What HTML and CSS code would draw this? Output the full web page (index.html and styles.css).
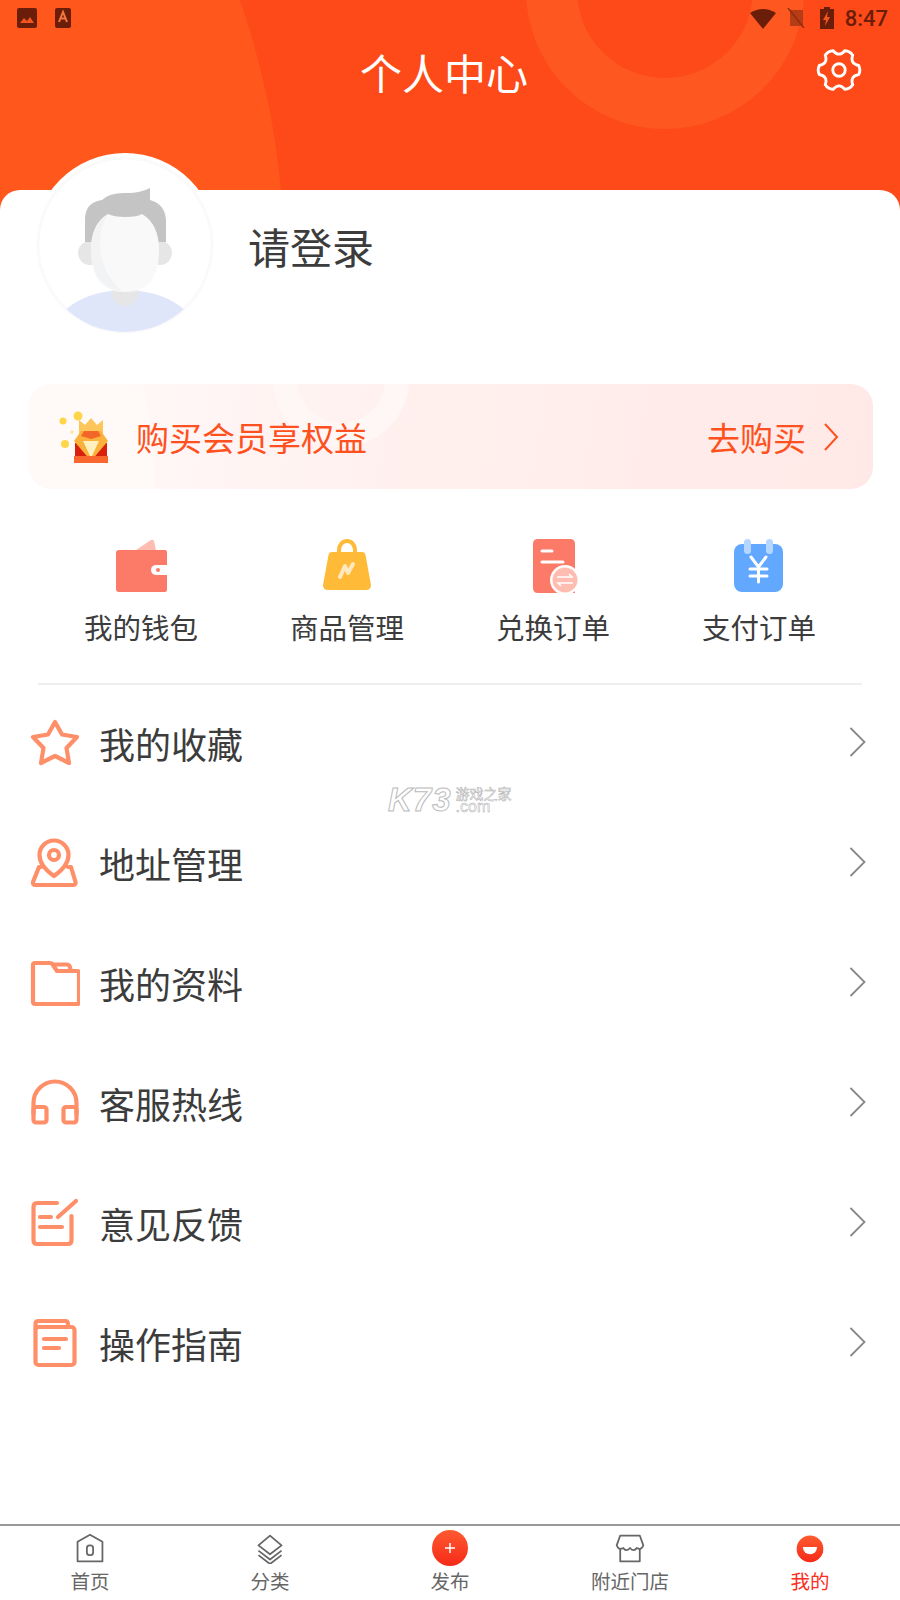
FILE: index.html
```html
<!DOCTYPE html>
<html lang="zh-CN">

<head>
    <meta charset="UTF-8">
    <meta name="viewport" content="width=device-width, initial-scale=1.0">
    <title>个人中心</title>
    <link rel="stylesheet" href="styles.css">
</head>

<body>
    <div class="page">
        <header class="header">
            <div class="blob-left"></div>
            <div class="blob-ring"></div>
            <div class="status-bar">
                <svg class="status-pic" viewBox="0 0 20 20"><rect width="20" height="20" rx="2" fill="#6a1d08"/><path d="M3 15l4-5 3 3 3-4 4 6z" fill="#f4541f"/></svg>
                <svg class="status-a" viewBox="0 0 16 20"><rect width="16" height="20" rx="2" fill="#6a1d08"/><path d="M4 14L8 4l4 10M5.500 10.500h5" fill="none" stroke="#f4763f" stroke-width="2"/></svg>
                <span class="status-gap"></span>
                <svg class="status-wifi" viewBox="0 0 26 21"><path d="M0 5Q13 -3 26 5L13 21z" fill="#6a1d08"/></svg>
                <svg class="status-sim" viewBox="0 0 18 20"><path d="M3 2h8l5 0v16H3z" fill="#b53c14"/><path d="M1 0l16 20" stroke="#8f2e10" stroke-width="1.500"/></svg>
                <svg class="status-bat" viewBox="0 0 14 22"><path d="M4 0h6v2h4v20H0V2h4z" fill="#6a1d08"/><path d="M8 4L3 13h3l-1 6 5-9H7z" fill="#f4541f"/></svg>
                <span class="status-time">8:47</span>
            </div>
            <div class="title-row">
                <h1 class="title">个人中心</h1>
                <svg class="gear" viewBox="0 0 48 48" fill="none" stroke="#fff" stroke-width="3">
                    <path d="M44.500 19.300Q47 24 44.500 28.700Q35.300 30.500 38.300 39.400Q35.500 43.900 30.100 44.100Q24 37 17.900 44.100Q12.500 43.900 9.700 39.400Q12.700 30.500 3.500 28.700Q1 24 3.500 19.300Q12.700 17.500 9.700 8.600Q12.500 4.100 17.900 3.900Q24 11 30.100 3.900Q35.500 4.100 38.300 8.600Q35.300 17.500 44.500 19.300Z"/>
                    <circle cx="24" cy="24" r="6.500"/>
                </svg>
            </div>
        </header>

        <main class="card">
            <section class="profile">
                <svg class="avatar" viewBox="0 0 190 190">
                    <defs>
                        <clipPath id="avatarClip"><circle cx="95" cy="95" r="87"/></clipPath>
                    </defs>
                    <circle cx="95" cy="95" r="92" fill="#fff"/>
                    <circle cx="95" cy="95" r="87" fill="none" stroke="#fafafa" stroke-width="3"/>
                    <ellipse cx="95" cy="190" rx="75" ry="50" fill="#e0e6fa" clip-path="url(#avatarClip)"/>
                    <rect x="82" y="130" width="26" height="26" rx="13" fill="#e6e6e6"/>
                    <circle cx="60" cy="103" r="12" fill="#e6e6e6"/>
                    <circle cx="130" cy="103" r="12" fill="#e6e6e6"/>
                    <path d="M55 92V68Q56 52 72 50Q80 42 98 43Q110 43 120 38V50Q135 54 136 70V92z" fill="#c4c4c4"/>
                    <path d="M95 67Q108 67 112 64Q129 74 129 100Q129 142 95 142Q61 142 61 100Q61 74 78 64Q84 67 95 67z" fill="#f9f9f9"/>
                    <path d="M78 64Q61 74 61 100Q61 136 92 142Q70 120 70 95Q70 75 78 64z" fill="#f2f3f5"/>
                </svg>
                <div class="login-name">请登录</div>
            </section>

            <section class="vip">
                <div class="vip-shape"></div>
                <div class="vip-ring"></div>
                <svg class="vip-icon" viewBox="0 0 60 60">
                    <circle cx="7" cy="14" r="3.500" fill="#ffd64a"/>
                    <circle cx="22" cy="9" r="4.500" fill="#ffd64a"/>
                    <circle cx="9" cy="37" r="4" fill="#ffd64a"/>
                    <circle cx="16" cy="25" r="1.500" fill="#ffe27a"/>
                    <path d="M23 30V13l6 5 6-7 6 7 6-5v17z" fill="#fdc55a"/>
                    <path d="M19 36h32v15H19z" fill="#d9200c"/>
                    <path d="M18 34l7-10h20l7 10-17 20z" fill="#fbb23c"/>
                    <path d="M27 34h16l-8 17z" fill="#fff0c0"/>
                    <path d="M28 24h14l3 5-10 3-10-3z" fill="#f4652a"/>
                    <path d="M18 49h34v7H18z" fill="#f9662e"/>
                </svg>
                <span class="vip-text">购买会员享权益</span>
                <span class="vip-buy">去购买</span>
                <svg class="vip-arrow" viewBox="0 0 16 28" fill="none" stroke="#ff5020" stroke-width="2"><path d="M2 1l12 13L2 27"/></svg>
            </section>

            <section class="quick">
                <div class="quick-item">
                    <svg class="quick-icon" viewBox="0 0 54 54">
                        <path d="M22 11L37 1q2 -1 3 1l2 9z" fill="#ffbdb2"/>
                        <path d="M2 14q0-3 3-3h46q2 0 2 2v13H43q-6 0-6 5t6 5h10v15q0 2-2 2H5q-3 0-3-3z" fill="#fb7a68"/>
                        <circle cx="44" cy="31" r="2" fill="#fb7a68"/>
                    </svg>
                    <span class="quick-label">我的钱包</span>
                </div>
                <div class="quick-item">
                    <svg class="quick-icon" viewBox="0 0 54 54">
                        <path d="M19 14V11a8 9 0 0 1 16 0v3" fill="none" stroke="#ffbb38" stroke-width="4"/>
                        <path d="M12 13h30q3 0 3.500 3L51 46q0 5-5 5H8q-5 0-5-5l5.500-30Q9 13 12 13z" fill="#ffbb38"/>
                        <path d="M20 38l5-11 3 7 5-9" fill="none" stroke="#ffe8c0" stroke-width="4" stroke-linejoin="round" stroke-linecap="round"/>
                    </svg>
                    <span class="quick-label">商品管理</span>
                </div>
                <div class="quick-item">
                    <svg class="quick-icon" viewBox="0 0 54 54">
                        <path d="M12 0h32q5 0 5 5v49H12q-5 0-5-5V5q0-5 5-5z" fill="#fb7a68"/>
                        <path d="M16 12h10M16 23h21" stroke="#fff" stroke-width="3" stroke-linecap="round"/>
                        <circle cx="39" cy="41" r="15" fill="#fff"/>
                        <circle cx="39" cy="41" r="12.500" fill="#ffbdb2"/>
                        <path d="M31 38h15l-3-3M47 44H32l3 3" fill="none" stroke="#fff" stroke-width="1.500"/>
                    </svg>
                    <span class="quick-label">兑换订单</span>
                </div>
                <div class="quick-item">
                    <svg class="quick-icon" viewBox="0 0 54 54">
                        <rect x="2" y="5" width="49" height="48" rx="8" fill="#62a8ff"/>
                        <rect x="12" y="0" width="7" height="15" rx="3.500" fill="#b4d6ff"/>
                        <rect x="34" y="0" width="7" height="15" rx="3.500" fill="#b4d6ff"/>
                        <path d="M19 18l7.500 10L34 18M18 30h17M18 37h17M26.500 28v15" fill="none" stroke="#fff" stroke-width="3" stroke-linecap="round"/>
                    </svg>
                    <span class="quick-label">支付订单</span>
                </div>
            </section>

            <section class="menu">
                <div class="menu-row">
                    <svg class="menu-icon" viewBox="0 0 50 50"><path d="M25 4l7 12.500 15 2.500-10.500 11L39 45l-14-7-14 7 2.500-15L3 19l15-2.500z"/></svg>
                    <span class="menu-text">我的收藏</span>
                    <svg class="menu-arrow" viewBox="0 0 17 30"><path d="M1.500 1l14 14-14 14"/></svg>
                </div>
                <div class="menu-row">
                    <svg class="menu-icon" viewBox="0 0 50 50"><path d="M24 38C14 31 9.500 25 9.500 17a14.500 14.500 0 0 1 29 0C38.500 25 34 31 24 38z"/><circle cx="24" cy="17" r="5"/><path d="M11 29H9L3 44q-.5 3 2.500 3H43q3 0 2.500-3L41 29h-3"/></svg>
                    <span class="menu-text">地址管理</span>
                    <svg class="menu-arrow" viewBox="0 0 17 30"><path d="M1.500 1l14 14-14 14"/></svg>
                </div>
                <div class="menu-row">
                    <svg class="menu-icon" viewBox="0 0 50 50"><path d="M3 7q0-2 2-2h15q2 0 3 2l4 6h20q2 0 2 2v29q0 2-2 2H5q-2 0-2-2z"/><path d="M24 6.500h13q3 0 3.500 5"/></svg>
                    <span class="menu-text">我的资料</span>
                    <svg class="menu-arrow" viewBox="0 0 17 30"><path d="M1.500 1l14 14-14 14"/></svg>
                </div>
                <div class="menu-row">
                    <svg class="menu-icon" viewBox="0 0 50 50"><path d="M3.500 36V25a21.500 21.500 0 0 1 43 0v11"/><rect x="3.500" y="29" width="13" height="15.500" rx="2.500"/><rect x="33.500" y="29" width="13" height="15.500" rx="2.500"/></svg>
                    <span class="menu-text">客服热线</span>
                    <svg class="menu-arrow" viewBox="0 0 17 30"><path d="M1.500 1l14 14-14 14"/></svg>
                </div>
                <div class="menu-row">
                    <svg class="menu-icon" viewBox="0 0 50 50"><path d="M27 5H7Q3.500 5 3.500 9v33Q3.500 46 7 46h31q3.500 0 3.500-4V18"/><path d="M28 19L46 3M10 19h11M10 29h22"/></svg>
                    <span class="menu-text">意见反馈</span>
                    <svg class="menu-arrow" viewBox="0 0 17 30"><path d="M1.500 1l14 14-14 14"/></svg>
                </div>
                <div class="menu-row">
                    <svg class="menu-icon" viewBox="0 0 50 50"><rect x="5.500" y="9" width="39" height="38" rx="3"/><path d="M5.500 11V6Q5.500 3 8.500 3H35q3 0 3 3v3M14 21h22M14 30h15"/></svg>
                    <span class="menu-text">操作指南</span>
                    <svg class="menu-arrow" viewBox="0 0 17 30"><path d="M1.500 1l14 14-14 14"/></svg>
                </div>
            </section>
        </main>

        <!-- marca d'agua por cima da lista -->
        <div class="watermark">
            <span class="wm-logo">K73</span>
            <span class="wm-side">
                <span class="wm-cn">游戏之家</span>
                <span class="wm-com">.com</span>
            </span>
        </div>

        <nav class="tabbar">
            <div class="tab">
                <svg class="tab-icon" viewBox="0 0 36 36" fill="none" stroke="#666" stroke-width="2"><path d="M18 3L32 11V33H4V11z" stroke-linejoin="round"/><rect x="14.500" y="15" width="7" height="11" rx="3"/></svg>
                <span class="tab-label">首页</span>
            </div>
            <div class="tab">
                <svg class="tab-icon" viewBox="0 0 36 36" fill="none" stroke="#666" stroke-width="2" stroke-linejoin="round"><path d="M18 4l13 11-13 10L5 15z"/><path d="M5 21l13 10 13-10M5 26l13 10 13-10"/></svg>
                <span class="tab-label">分类</span>
            </div>
            <div class="tab">
                <svg class="tab-icon tab-icon-big" viewBox="0 0 36 36"><defs><linearGradient id="plusFill" x1="0" y1="0" x2="0" y2="1"><stop offset="0" stop-color="#ff5a30"/><stop offset="1" stop-color="#f52a18"/></linearGradient></defs><circle cx="18" cy="18" r="18" fill="url(#plusFill)"/><path d="M18 13v10M13 18h10" stroke="#fff" stroke-width="1.500"/></svg>
                <span class="tab-label">发布</span>
            </div>
            <div class="tab">
                <svg class="tab-icon" viewBox="0 0 36 36" fill="none" stroke="#666" stroke-width="2" stroke-linejoin="round"><path d="M7 4h22l4 11q-2 6-7.500 3-3 5-7.500 0-4.500 5-7.500 0Q5 21 3 15z"/><path d="M7 18v15h22V18"/></svg>
                <span class="tab-label">附近门店</span>
            </div>
            <div class="tab tab-active">
                <svg class="tab-icon" viewBox="0 0 36 36"><defs><linearGradient id="meFill" x1="0" y1="0" x2="0" y2="1"><stop offset="0" stop-color="#ff5a30"/><stop offset="1" stop-color="#f52a18"/></linearGradient></defs><circle cx="18" cy="19" r="15" fill="url(#meFill)"/><path d="M10 17h16a8 8 0 0 1-16 0z" fill="#fff"/></svg>
                <span class="tab-label">我的</span>
            </div>
        </nav>
    </div>
</body>

</html>
```

FILE: styles.css
```css
* {
    box-sizing: border-box;
}

body {
    margin: 0;
    background-color: #fff;
    font-family: "Noto Sans CJK SC", "Noto Sans", sans-serif;
    color: #3c3c3c;
}

.page {
    position: relative;
    width: 900px;
    height: 1600px;
    overflow: hidden;
    display: flex;
    flex-direction: column;
}

/* topo laranja */
.header {
    position: relative;
    flex: none;
    height: 210px;
    overflow: hidden;
    background-color: #fe4a18;
}

.blob-left {
    position: absolute;
    left: -1292px;
    top: -528px;
    width: 1576px;
    height: 1576px;
    border-radius: 50%;
    background-color: #ff6420;
    opacity: 0.5;
}

.blob-ring {
    position: absolute;
    left: 526px;
    top: -149px;
    width: 278px;
    height: 278px;
    border-radius: 50%;
    border: 51px solid #fe5720;
}

.status-bar {
    position: relative;
    display: flex;
    align-items: center;
    height: 36px;
    padding: 0 12px 0 17px;
}

.status-pic {
    width: 20px;
    height: 20px;
}

.status-a {
    width: 16px;
    height: 20px;
    margin-left: 18px;
}

.status-gap {
    flex: 1;
}

.status-wifi {
    width: 26px;
    height: 21px;
}

.status-sim {
    width: 18px;
    height: 20px;
    margin-left: 11px;
}

.status-bat {
    width: 14px;
    height: 22px;
    margin-left: 15px;
}

.status-time {
    margin-left: 11px;
    font-family: Roboto, sans-serif;
    font-size: 22px;
    font-weight: 500;
    color: #6a1d08;
}

.title-row {
    position: relative;
    display: flex;
    align-items: center;
    height: 70px;
    padding: 0 38px 0 72px;
}

.title {
    flex: 1;
    margin: 0;
    font-size: 42px;
    font-weight: 400;
    text-align: center;
    color: #fff;
}

.gear {
    width: 46px;
    height: 46px;
    margin-top: -2px;
}

/* cartao branco */
.card {
    position: relative;
    flex: 1;
    margin-top: -20px;
    background-color: #fff;
    border-radius: 20px 20px 0 0;
}

.profile {
    display: flex;
    align-items: center;
    height: 150px;
    padding-left: 30px;
}

.avatar {
    flex: none;
    width: 190px;
    height: 190px;
    margin-top: -40px;
}

.login-name {
    margin: -39px 0 0 28px;
    font-size: 42px;
}

.vip {
    position: relative;
    display: flex;
    align-items: center;
    height: 105px;
    margin: 44px 27px 0 29px;
    padding: 0 34px 0 27px;
    overflow: hidden;
    border-radius: 22px;
    background: linear-gradient(100deg, #fffafa 0%, #fff0ee 45%, #ffe9e7 100%);
}

.vip-shape {
    position: absolute;
    left: -674px;
    top: -300px;
    width: 800px;
    height: 800px;
    border-radius: 50%;
    background-color: #fffaf8;
}

.vip-ring {
    position: absolute;
    left: 244px;
    top: -73px;
    width: 136px;
    height: 136px;
    border-radius: 50%;
    border: 24px solid #fff7f5;
}

.vip-icon {
    position: relative;
    flex: none;
    width: 60px;
    height: 60px;
}

.vip-text {
    position: relative;
    flex: 1;
    margin-left: 20px;
    font-size: 33px;
    color: #ff5020;
}

.vip-buy {
    position: relative;
    font-size: 33px;
    color: #ff5020;
}

.vip-arrow {
    position: relative;
    width: 16px;
    height: 28px;
    margin-left: 17px;
}

.quick {
    display: grid;
    grid-template-columns: repeat(4, 1fr);
    height: 196px;
    margin: 0 38px;
    padding-top: 50px;
    border-bottom: 2px solid #efefef;
}

.quick-item {
    display: flex;
    flex-direction: column;
    align-items: center;
}

.quick-icon {
    width: 54px;
    height: 54px;
}

.quick-label {
    margin-top: 13px;
    font-size: 28.500px;
    line-height: 42px;
}

.menu {
    margin-top: -2px;
}

.menu-row {
    display: flex;
    align-items: center;
    height: 120px;
    padding: 0 34px 0 30px;
}

.menu-icon {
    flex: none;
    width: 50px;
    height: 50px;
    fill: none;
    stroke: #ff8f68;
    stroke-width: 4.200;
    stroke-linecap: round;
    stroke-linejoin: round;
}

.menu-text {
    flex: 1;
    margin-left: 19px;
    font-size: 36px;
}

.menu-arrow {
    flex: none;
    width: 17px;
    height: 30px;
    margin-top: -2px;
    fill: none;
    stroke: #888;
    stroke-width: 1.800;
}

/* marca d'agua */
.watermark {
    position: absolute;
    left: 388px;
    top: 784px;
    display: flex;
    align-items: center;
    gap: 4px;
    color: #fff;
}

.wm-logo {
    font-family: "Liberation Sans", sans-serif;
    font-size: 33px;
    font-weight: 700;
    font-style: italic;
    line-height: 32px;
    letter-spacing: 1px;
    -webkit-text-stroke: 1px #bbb;
}

.wm-side {
    display: flex;
    flex-direction: column;
    line-height: 14px;
}

.wm-cn {
    font-size: 14px;
    -webkit-text-stroke: 0.5px #aaa;
}

.wm-com {
    font-family: "Liberation Sans", sans-serif;
    font-size: 16px;
    -webkit-text-stroke: 0.5px #aaa;
}

/* barra de baixo */
.tabbar {
    flex: none;
    display: grid;
    grid-template-columns: repeat(5, 1fr);
    height: 76px;
    border-top: 2px solid #999;
    background-color: #fff;
}

.tab {
    display: flex;
    flex-direction: column;
    align-items: center;
    color: #666;
}

.tab-icon {
    width: 32px;
    height: 32px;
    margin-top: 6px;
    margin-bottom: 2px;
}

.tab-icon-big {
    width: 36px;
    height: 36px;
    margin-top: 4px;
    margin-bottom: 0;
}

.tab-label {
    font-size: 19.500px;
    line-height: 30px;
}

.tab-active {
    color: #fa2e1e;
}
```
